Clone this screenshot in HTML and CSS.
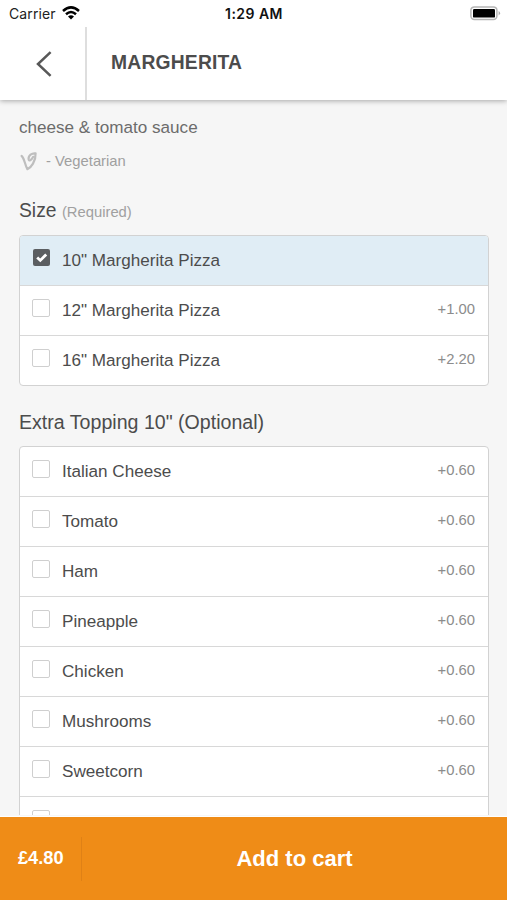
FILE: index.html
```html
<!DOCTYPE html>
<html lang="en">
<head>
<meta charset="utf-8">
<title>Margherita</title>
<link rel="stylesheet" href="styles.css">
</head>
<body>
<div class="screen">
  <header class="header">
    <div class="status">
      <div class="carrier"><span>Carrier</span>
        <svg class="wifi" width="18" height="14" viewBox="0 0 18 14"><g fill="none" stroke="#000" stroke-width="2.5"><path d="M1 5Q9-2.2 17 5"/><path d="M4 8.3Q9 3.8 14 8.3"/></g><path d="M6 10.4Q9 8 12 10.4L9 13.5Z"/></svg>
      </div>
      <div class="clock">1:29 AM</div>
      <svg class="battery" width="31" height="15" viewBox="0 0 31 15"><rect x=".9" y=".9" width="26" height="12.6" rx="3.4" fill="#fff" stroke="#b5b5b5" stroke-width="1.5"/><rect x="3" y="3" width="22" height="8.6" rx="1.2"/><path d="M28.6 5q3 2.2 0 4.4z" fill="#aaa"/></svg>
    </div>
    <div class="nav">
      <button class="back" aria-label="Back"><svg width="16" height="26" viewBox="0 0 16 26"><path d="M14.6 1.2L2 13L14.6 24.8" fill="none" stroke="#585858" stroke-width="2.5"/></svg></button>
      <h1 class="title">MARGHERITA</h1>
    </div>
  </header>
  <main class="content">
    <p class="description">cheese &amp; tomato sauce</p>
    <p class="diet"><svg width="19" height="20" viewBox="0 0 19 20"><path d="M2.6 5C5.4 7 5.6 13 8.4 18.2C12 16.8 17 10 16.6 2.4C13 1.8 9.2 4.3 9.6 8.2C9.9 10.4 12.2 9.6 14.2 5.8" fill="none" stroke="#bebebe" stroke-width="2.2" stroke-linecap="round" stroke-linejoin="round"/></svg><span>- Vegetarian</span></p>
    <h2 class="heading size-heading">Size <small>(Required)</small></h2>
    <ul class="options">
      <li class="option selected"><span class="box"><svg width="17" height="17" viewBox="0 0 17 17"><path d="M4.2 8.4L7.3 11.4L13.2 5.4" fill="none" stroke="#fff" stroke-width="2.8"/></svg></span><span class="name">10" Margherita Pizza</span></li>
      <li class="option"><span class="box"></span><span class="name">12" Margherita Pizza</span><span class="price">+1.00</span></li>
      <li class="option"><span class="box"></span><span class="name">16" Margherita Pizza</span><span class="price">+2.20</span></li>
    </ul>
    <h2 class="heading topping-heading">Extra Topping 10" (Optional)</h2>
    <ul class="options">
      <li class="option"><span class="box"></span><span class="name">Italian Cheese</span><span class="price">+0.60</span></li>
      <li class="option"><span class="box"></span><span class="name">Tomato</span><span class="price">+0.60</span></li>
      <li class="option"><span class="box"></span><span class="name">Ham</span><span class="price">+0.60</span></li>
      <li class="option"><span class="box"></span><span class="name">Pineapple</span><span class="price">+0.60</span></li>
      <li class="option"><span class="box"></span><span class="name">Chicken</span><span class="price">+0.60</span></li>
      <li class="option"><span class="box"></span><span class="name">Mushrooms</span><span class="price">+0.60</span></li>
      <li class="option"><span class="box"></span><span class="name">Sweetcorn</span><span class="price">+0.60</span></li>
      <li class="option"><span class="box"></span></li>
    </ul>
  </main>
  <footer class="cart">
    <div class="total">£4.80</div>
    <button class="add">Add to cart</button>
  </footer>
</div>
</body>
</html>
```
FILE: styles.css
```css
* { box-sizing: border-box; }
body, h1, h2, p, ul { margin: 0; padding: 0; }
body { font-family: "Liberation Sans", Arial, sans-serif; color: #4c4c4c; background: #f6f6f6; }
button { border: 0; padding: 0; background: none; font: inherit; color: inherit; }
svg { display: block; flex: none; }
.screen { height: 900px; display: flex; flex-direction: column; overflow: hidden; }
.header { height: 100px; flex: none; background: #fff; box-shadow: 0 1px 5px rgba(0, 0, 0, .32); z-index: 1; }
.status { height: 27px; display: grid; grid-template-columns: 1fr auto 1fr; align-items: center; padding: 0 6px 0 9px; font: 14px/27px Inter, sans-serif; color: #222; }
.carrier { display: flex; align-items: center; gap: 6px; letter-spacing: .1px; }
.wifi { margin-top: -2px; }
.clock { font-weight: 600; font-size: 14px; letter-spacing: .45px; margin-left: -2px; color: #111; }
.battery { justify-self: end; }
.nav { height: 73px; display: flex; }
.back { width: 87px; border-right: 2px solid #dedede; display: flex; align-items: center; justify-content: center; padding-left: 2px; }
.title { font-size: 19.3px; line-height: 72px; padding-left: 24px; letter-spacing: .2px; }
.content { flex: 1; min-height: 0; overflow: hidden; padding: 18px 18px 0 19px; }
.description { font-size: 17.1px; line-height: 20px; color: #6c6c6c; }
.diet { height: 20px; margin-top: 13px; display: flex; align-items: center; gap: 8px; font-size: 14.8px; line-height: 20px; color: #a0a0a0; }
.heading { font-weight: 400; line-height: 24px; white-space: nowrap; }
.heading small { font-size: 14.8px; color: #a0a0a0; }
.size-heading { font-size: 19.3px; margin-top: 28px; margin-bottom: 10.6px; }
.topping-heading { font-size: 19.6px; margin-top: 24px; margin-bottom: 12px; }
.options { list-style: none; border: 1.5px solid #d2d2d2; border-radius: 4px; background: #fff; overflow: hidden; }
.option { height: 50.1px; display: flex; align-items: flex-start; padding: 0 13px 0 12px; border-bottom: 1.5px solid #d8d8d8; }
.option:last-child { height: 49px; border-bottom: 0; }
.selected { background: #e0edf5; }
.box { width: 18px; height: 18px; margin: 13px 12px 0 0; border: 1px solid #cfcfcf; border-radius: 2px; background: #fff; flex: none; }
.selected .box { border: 0; background: #5b5e61; width: 17px; height: 17px; margin-left: 1px; }
.name { flex: 1; font-size: 17.1px; line-height: 49px; }
.price { font-size: 14.8px; line-height: 47px; color: #8c8c8c; }
.cart { height: 83px; flex: none; display: flex; align-items: center; background: #ef8c17; color: #fff; font-weight: 700; box-shadow: 0 -1px 0 #fff, 0 -2px 0 #f7f7f7; z-index: 1; }
.total { width: 82px; height: 44px; padding-left: 18px; border-right: 1px solid #df8116; font-size: 18.2px; line-height: 43px; }
.add { flex: 1; font-size: 22px; line-height: 44px; }
```
